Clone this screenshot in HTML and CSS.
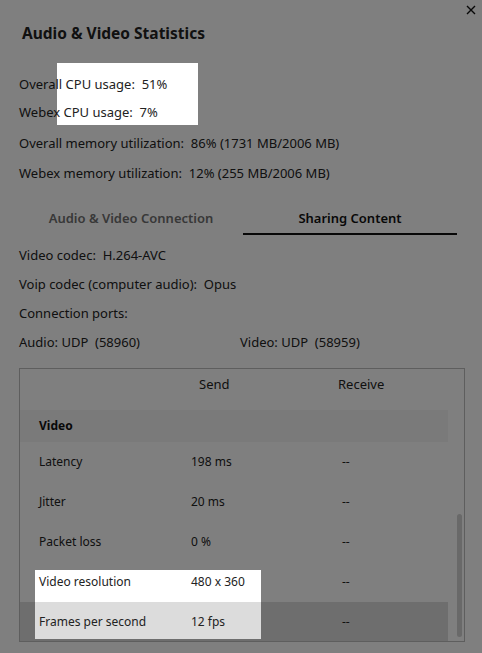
FILE: index.html
```html
<!DOCTYPE html>
<html lang="en">

<head>
    <meta charset="UTF-8">
    <meta name="viewport" content="width=device-width, initial-scale=1.0">
    <title>Audio &amp; Video Statistics</title>
    <link rel="stylesheet" href="styles.css">
</head>

<body>
    <div class="dialog">
        <button class="close" aria-label="Close">
            <svg width="10" height="10" viewBox="0 0 10 10">
                <path d="M1 1L9 9M9 1L1 9" stroke="#111" stroke-width="1.4" fill="none"/>
            </svg>
        </button>

        <h1 class="title">Audio &amp; Video Statistics</h1>

        <div class="usage">
            <div class="group cpu">
                <p>Overall CPU usage:&nbsp; 51%</p>
                <p>Webex CPU usage:&nbsp; 7%</p>
            </div>
            <div class="group memory">
                <p>Overall memory utilization:&nbsp; 86% (1731 MB/2006 MB)</p>
                <p>Webex memory utilization:&nbsp; 12% (255 MB/2006 MB)</p>
            </div>
        </div>

        <!-- tabs -->
        <div class="tabs">
            <div class="tab">Audio &amp; Video Connection</div>
            <div class="tab active">Sharing Content</div>
        </div>

        <div class="details">
            <p>Video codec:&nbsp; H.264-AVC</p>
            <p>Voip codec (computer audio):&nbsp; Opus</p>
            <p>Connection ports:</p>
            <div class="ports">
                <span>Audio: UDP&nbsp; (58960)</span>
                <span>Video: UDP&nbsp; (58959)</span>
            </div>
        </div>

        <!-- statistics table -->
        <div class="stats">
            <div class="stats-body">
                <div class="stats-head">
                    <span></span>
                    <span>Send</span>
                    <span>Receive</span>
                </div>
                <div class="section">Video</div>
                <div class="row"><span>Latency</span><span>198 ms</span><span>--</span></div>
                <div class="row"><span>Jitter</span><span>20 ms</span><span>--</span></div>
                <div class="row"><span>Packet loss</span><span>0 %</span><span>--</span></div>
                <div class="row"><span>Video resolution</span><span>480 x 360</span><span>--</span></div>
                <div class="row selected"><span>Frames per second</span><span>12 fps</span><span>--</span></div>
            </div>
            <div class="scrollbar">
                <div class="thumb"></div>
            </div>
        </div>
    </div>

    <!-- dimmed layer with two highlighted cut-outs -->
    <svg class="dim" width="482" height="653" viewBox="0 0 482 653">
        <path fill-rule="evenodd" fill="rgba(0,0,0,0.5)"
              d="M0 0H482V653H0Z M57 63H198V125H57Z M35 570H261V639H35Z"/>
    </svg>
</body>

</html>
```

FILE: styles.css
```css
body {
    margin: 0;
    background-color: #fff;
    font-family: "Noto Sans", "Open Sans", sans-serif;
    font-size: 13px;
    color: #222;
}

p {
    margin: 0;
    line-height: 20px;
}

.dialog {
    position: relative;
    width: 482px;
    height: 653px;
    overflow: hidden;
    padding: 23px 0 0 19px;
    box-sizing: border-box;
}

.close {
    position: absolute;
    top: 5px;
    right: 6px;
    width: 10px;
    height: 10px;
    padding: 0;
    border: none;
    background: none;
    display: flex;
}

.title {
    margin: 0 0 0 3px;
    font-size: 15.5px;
    font-weight: bold;
    line-height: 20px;
    color: #222;
}

.usage {
    margin-top: 31px;
    display: flex;
    flex-direction: column;
    gap: 11px;
}

.group {
    display: flex;
    flex-direction: column;
}

.cpu {
    gap: 8px;
}

.memory {
    gap: 10px;
}

.tabs {
    display: grid;
    grid-template-columns: 224px 214px;
    padding-top: 25px;
}

.tab {
    text-align: center;
    line-height: 20px;
    padding-bottom: 5px;
    border-bottom: 2px solid transparent;
    font-weight: 600;
    color: #707070;
}

.tab.active {
    color: #111;
    border-bottom-color: #111;
}

.details {
    margin-top: 10px;
    display: flex;
    flex-direction: column;
    gap: 9px;
}

.ports {
    display: grid;
    grid-template-columns: 221px auto;
    line-height: 20px;
}

.stats {
    margin-top: 16px;
    width: 446px;
    height: 274px;
    box-sizing: border-box;
    border: 1px solid #bdbdbd;
    display: flex;
    overflow: hidden;
    font-size: 12px;
}

.stats-body {
    width: 428px;
}

.stats-head {
    display: grid;
    grid-template-columns: 179px 139px auto;
    height: 41px;
    padding-top: 5px;
    box-sizing: border-box;
    line-height: 20px;
    font-size: 13px;
}

.section {
    height: 32px;
    line-height: 32px;
    padding-left: 19px;
    background-color: #f4f4f4;
    font-weight: bold;
    color: #111;
}

.row {
    display: grid;
    grid-template-columns: 152px 151px auto;
    height: 40px;
    line-height: 40px;
    padding-left: 19px;
}

.row.selected {
    background-color: #dcdcdc;
}

.scrollbar {
    flex: 1;
    position: relative;
}

.thumb {
    position: absolute;
    left: 9px;
    top: 145px;
    width: 5px;
    height: 123px;
    border-radius: 3px;
    background-color: #d2d2d2;
}

.dim {
    position: absolute;
    top: 0;
    left: 0;
    pointer-events: none;
}
```
